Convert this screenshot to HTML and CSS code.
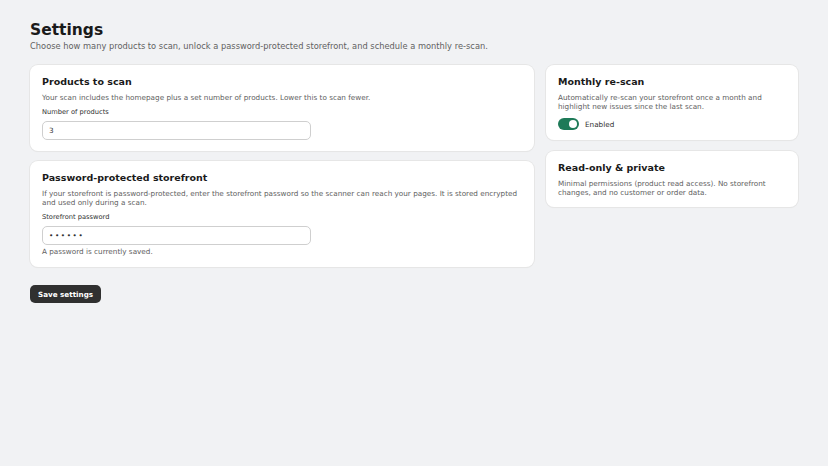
FILE: index.html
```html
<!DOCTYPE html>
<html lang="en">
<head>
    <meta charset="UTF-8">
    <meta name="viewport" content="width=device-width, initial-scale=1.0">
    <title>Settings</title>
    <link rel="stylesheet" href="styles.css">
</head>
<body>

    <div class="page">
        <h1>Settings</h1>
        <p class="subtitle">Choose how many products to scan, unlock a password-protected storefront, and schedule a monthly re-scan.</p>

        <div class="layout">
            <div class="main-col">
                <div class="card">
                    <h2>Products to scan</h2>
                    <p class="hint">Your scan includes the homepage plus a set number of products. Lower this to scan fewer.</p>
                    <label class="field-label" for="productCount">Number of products</label>
                    <input class="field" type="text" id="productCount" value="3">
                </div>

                <div class="card">
                    <h2>Password-protected storefront</h2>
                    <p class="hint">If your storefront is password-protected, enter the storefront password so the scanner can reach your pages. It is stored encrypted and used only during a scan.</p>
                    <label class="field-label" for="storePassword">Storefront password</label>
                    <input class="field password" type="password" id="storePassword" value="secret">
                    <p class="note">A password is currently saved.</p>
                </div>
            </div>

            <div class="side-col">
                <div class="card">
                    <h2>Monthly re-scan</h2>
                    <p class="hint">Automatically re-scan your storefront once a month and highlight new issues since the last scan.</p>
                    <label class="toggle-row">
                        <span class="toggle on"><span class="knob"></span></span>
                        <span>Enabled</span>
                    </label>
                </div>

                <div class="card">
                    <h2>Read-only &amp; private</h2>
                    <p class="hint">Minimal permissions (product read access). No storefront changes, and no customer or order data.</p>
                </div>
            </div>
        </div>

        <button class="save-btn">Save settings</button>
    </div>

</body>
</html>
```

FILE: styles.css
```css
body {
    margin: 0;
    font-family: "DejaVu Sans", sans-serif;
    background-color: #f1f2f4;
    color: #1a1a1a;
}
.page {
    padding: 20px 30px;
}
h1 {
    font-size: 15.5px;
    font-weight: bold;
    margin: 0;
    line-height: 20px;
}
.subtitle {
    font-size: 8.3px;
    line-height: 10px;
    color: #616161;
    margin: 1px 0 14px;
}

/* Two column layout */
.layout {
    display: grid;
    grid-template-columns: 2fr 1fr;
    gap: 12px;
    align-items: start;
}
.main-col, .side-col {
    display: flex;
    flex-direction: column;
    gap: 10px;
}
.side-col {
    gap: 11px;
}
.card {
    background-color: #fff;
    border-radius: 8px;
    padding: 11px 12px;
    box-shadow: 0 0 0 1px #e6e6e6, 0 1px 1px rgba(0, 0, 0, 0.06);
}
.side-col .card {
    padding-bottom: 10px;
}
h2 {
    font-size: 9.5px;
    font-weight: bold;
    margin: 0 0 5px;
    line-height: 12px;
}
.hint {
    font-size: 7.25px;
    color: #616161;
    margin: 0 0 6px;
    line-height: 9px;
}
.hint:last-child {
    margin-bottom: 0;
}
.field-label {
    display: block;
    font-size: 6.7px;
    line-height: 8px;
    margin-bottom: 5px;
    color: #303030;
}
.field {
    display: block;
    box-sizing: border-box;
    width: 269px;
    height: 19px;
    padding: 0 6px;
    border: 1px solid #cfcfcf;
    border-radius: 5px;
    font-family: inherit;
    font-size: 7.25px;
    color: #303030;
    outline: none;
}
.password {
    letter-spacing: 1.6px;
}
.note {
    font-size: 7.25px;
    line-height: 8px;
    color: #616161;
    margin: 3px 0 0;
}

/* Toggle */
.toggle-row {
    display: flex;
    align-items: center;
    gap: 6px;
    margin-top: 7px;
    font-size: 7.25px;
    color: #303030;
}
.toggle {
    width: 21px;
    height: 12px;
    border-radius: 6px;
    background-color: #cfcfcf;
    position: relative;
}
.toggle.on {
    background-color: #1e7a58;
}
.knob {
    position: absolute;
    top: 2px;
    right: 2px;
    width: 8px;
    height: 8px;
    border-radius: 50%;
    background-color: #fff;
}

.save-btn {
    display: block;
    margin-top: 18px;
    padding: 0 8px;
    height: 18px;
    background-color: #303030;
    color: #fff;
    border: none;
    border-radius: 5px;
    font-family: inherit;
    font-size: 7.2px;
    font-weight: bold;
    cursor: pointer;
}
```
